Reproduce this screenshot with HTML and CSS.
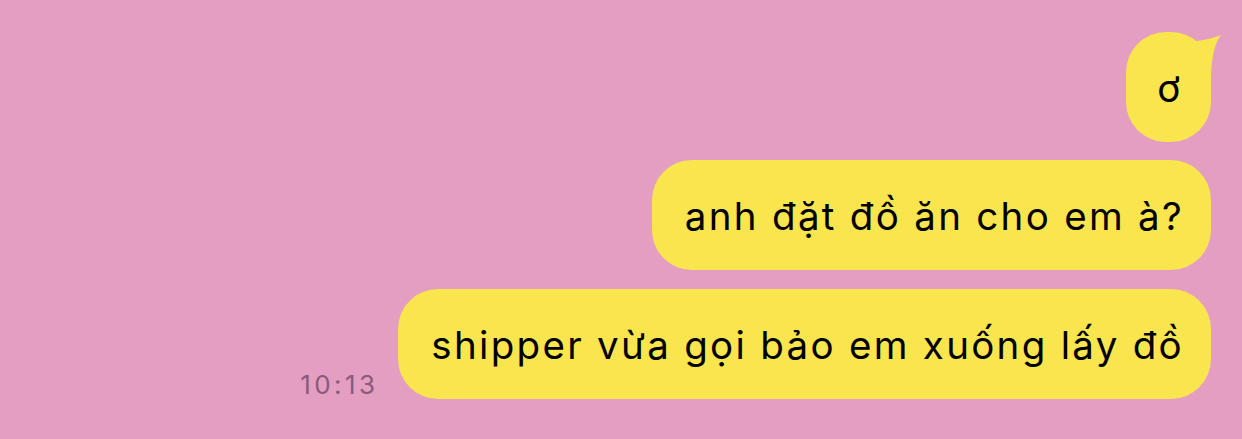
FILE: index.html
```html
<!DOCTYPE html>
<html lang="vi">
<head>
<meta charset="utf-8">
<link rel="stylesheet" href="styles.css">
</head>
<body>
<main class="chat">
  <div class="row">
    <div class="bubble first">ơ
      <svg class="tail" viewBox="0 0 40 50" width="40" height="50" aria-hidden="true"><path d="M0 15 L10 9 Q22 8 35 3 Q26 14 25 45 L0 45 Z" fill="#f9e54d"/></svg>
    </div>
  </div>
  <div class="row">
    <div class="bubble">anh đặt đồ ăn cho em à?</div>
  </div>
  <div class="row last">
    <span class="time">10:13</span>
    <div class="bubble">shipper vừa gọi bảo em xuống lấy đồ</div>
  </div>
</main>
</body>
</html>
```
FILE: styles.css
```css
* { box-sizing: border-box; }
html, body { margin: 0; padding: 0; }
body {
  background: #e39ec1;
  width: 1242px;
  height: 439px;
  overflow: hidden;
  font-family: Inter, "Noto Sans", sans-serif;
}
.chat {
  display: flex;
  flex-direction: column;
  align-items: flex-end;
  gap: 18px;
  padding: 32px 31px 0 0;
}
.row {
  display: flex;
  align-items: flex-end;
  gap: 20px;
}
.row.last {
  margin-top: 1px;
}
.bubble {
  position: relative;
  background: #f9e54d;
  color: #000;
  font-size: 38.5px;
  letter-spacing: 2.3px;
  line-height: 44px;
  height: 110px;
  padding: 34px 27px 32px 33px;
  border-radius: 40px;
  white-space: nowrap;
}
.bubble.first {
  width: 85px;
  text-align: center;
  padding-left: 3px;
  padding-right: 0;
}
.tail {
  position: absolute;
  left: 60px;
  top: 0;
  display: block;
}
.time {
  font-size: 26px;
  letter-spacing: 3.4px;
  color: #8a5a7a;
  line-height: 26px;
  padding-bottom: 1px;
}
```
